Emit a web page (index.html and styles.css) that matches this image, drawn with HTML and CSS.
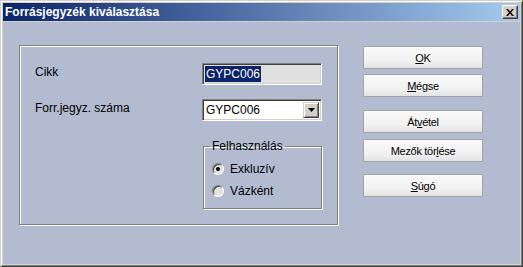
FILE: index.html
```html
<!DOCTYPE html>
<html>

<head>
    <title>Forrásjegyzék kiválasztása</title>
    <link rel="stylesheet" href="styles.css">
</head>

<body>
    <div class="window">
        <div class="titlebar">
            <span class="title">Forrásjegyzék kiválasztása</span>
            <span class="close">
                <svg width="8" height="7" viewBox="0 0 8 7">
                    <path d="M0 0h2l2 2.5 2-2.5h2L5 3.5 8 7H6L4 4.5 2 7H0l3-3.5z" fill="#000"/>
                </svg>
            </span>
        </div>
        <div class="client">
            <div class="group">
                <div class="form">
                    <label class="lbl">Cikk</label>
                    <div class="edit"><span class="sel">GYPC006</span></div>

                    <label class="lbl">Forr.jegyz. száma</label>
                    <div class="combo">
                        <span class="value">GYPC006</span>
                        <span class="drop">
                            <svg width="7" height="4" viewBox="0 0 7 4">
                                <path d="M0 0h7L3.5 4z" fill="#000"/>
                            </svg>
                        </span>
                    </div>

                    <fieldset class="usage">
                        <legend>Felhasználás</legend>
                        <div class="radio"><span class="dot checked"></span>Exkluzív</div>
                        <div class="radio"><span class="dot"></span>Vázként</div>
                    </fieldset>
                </div>
            </div>
            <div class="buttons">
                <button class="btn"><u>O</u>K</button>
                <button class="btn"><u>M</u>égse</button>
                <button class="btn sep">Át<u>v</u>étel</button>
                <button class="btn near">Mezők tör<u>l</u>ése</button>
                <button class="btn sep2"><u>S</u>úgó</button>
            </div>
        </div>
    </div>
</body>

</html>
```

FILE: styles.css
```css
html,
body {
    margin: 0;
    padding: 0;
}
body {
    font-family: "Liberation Sans", Arial, sans-serif;
    font-size: 12px;
    color: #000;
}
.window {
    width: 523px;
    height: 267px;
    box-sizing: border-box;
    display: flex;
    flex-direction: column;
    background-color: #d4d0c8;
    border: 1px solid;
    border-color: #d4d0c8 #404040 #404040 #d4d0c8;
    box-shadow: inset 1px 1px #fff, inset -1px -1px #808080;
    padding: 2px;
}
.titlebar {
    height: 18px;
    display: flex;
    align-items: center;
    justify-content: space-between;
    background: linear-gradient(to right, #0a246a, #a6caf0);
    padding: 0 2px 0 2px;
}
.title {
    color: #fff;
    font-weight: bold;
    font-size: 12px;
    line-height: 14px;
}
.close {
    width: 16px;
    height: 14px;
    box-sizing: border-box;
    display: flex;
    align-items: center;
    justify-content: center;
    background-color: #d4d0c8;
    border: 1px solid;
    border-color: #fff #404040 #404040 #fff;
    box-shadow: inset -1px -1px #808080;
}
.client {
    flex: 1;
    margin-top: 1px;
    background-color: #b2bbd0;
    display: flex;
    align-items: flex-start;
    gap: 25px;
    padding: 23px 0 0 16px;
}
.group {
    width: 319px;
    height: 180px;
    box-sizing: border-box;
    border: 1px solid #808080;
    box-shadow: inset 1px 1px #fff, 1px 1px #fff;
    padding: 17px 0 0 15px;
}
.form {
    display: grid;
    grid-template-columns: 167px 120px;
    row-gap: 14px;
    align-items: start;
}
.lbl {
    line-height: 14px;
    padding-top: 2px;
}
.edit,
.combo {
    height: 22px;
    box-sizing: border-box;
    border: 1px solid;
    border-color: #808080 #fff #fff #808080;
    box-shadow: inset 1px 1px #404040, inset -1px -1px #d4d0c8;
    padding: 2px 2px 0 2px;
    display: flex;
    align-items: flex-start;
}
.edit {
    background-color: #e0e0e0;
}
.sel {
    background-color: #0a246a;
    color: #fff;
    line-height: 16px;
    padding: 0 1px;
}
.combo {
    background-color: #fff;
    justify-content: space-between;
}
.value {
    line-height: 16px;
    padding-left: 1px;
}
.drop {
    width: 16px;
    height: 16px;
    box-sizing: border-box;
    display: flex;
    align-items: center;
    justify-content: center;
    background-color: #d4d0c8;
    border: 1px solid;
    border-color: #d4d0c8 #404040 #404040 #d4d0c8;
    box-shadow: inset 1px 1px #fff, inset -1px -1px #808080;
}
.usage {
    grid-column: 2;
    margin: 4px 0 0 1px;
    width: 119px;
    height: 70px;
    box-sizing: border-box;
    border: 1px solid #808080;
    box-shadow: inset 1px 1px #fff, 1px 1px #fff;
    padding: 5px 0 0 8px;
}
.usage legend {
    padding: 0 2px;
    margin-left: -2px;
    line-height: 14px;
}
.radio {
    display: flex;
    align-items: center;
    height: 22px;
    gap: 6px;
}
.dot {
    width: 12px;
    height: 12px;
    box-sizing: border-box;
    border-radius: 50%;
    border: 1px solid;
    border-color: #808080 #fff #fff #808080;
    box-shadow: inset 1px 1px #404040;
    background-color: #e4e2dc;
    display: flex;
    align-items: center;
    justify-content: center;
}
.dot.checked::after {
    content: "";
    width: 4px;
    height: 4px;
    border-radius: 50%;
    background-color: #000;
}
.buttons {
    display: flex;
    flex-direction: column;
    padding-top: 1px;
}
.btn {
    width: 120px;
    height: 23px;
    margin: 0 0 5px 0;
    padding: 0;
    font-family: "Liberation Sans", Arial, sans-serif;
    font-size: 11px;
    letter-spacing: -0.3px;
    color: #000;
    background: linear-gradient(#fafafa, #f0f0f0 70%, #e2e2e2);
    border: 1px solid #a3a3a3;
    border-radius: 1px;
}
.btn.sep {
    margin-top: 8px;
    margin-bottom: 6px;
}
.btn.sep2 {
    margin-top: 7px;
}
```
